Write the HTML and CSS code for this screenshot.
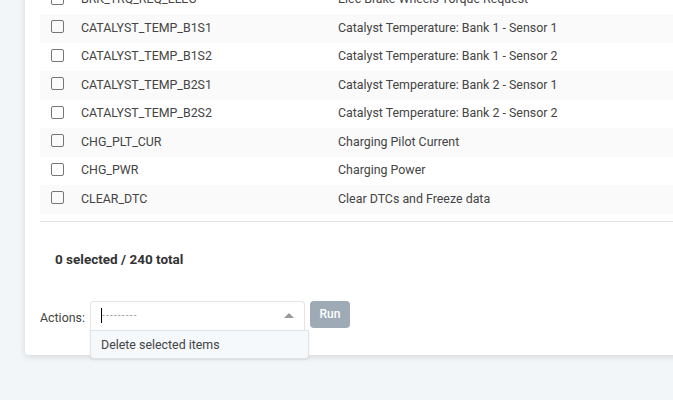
FILE: index.html
```html
<!DOCTYPE html>
<html>
<head>
<meta charset="utf-8">
<link rel="stylesheet" href="styles.css">
</head>
<body>
<div class="card">
  <div class="table">
    <div class="row"><span class="cb"></span><span class="c1">BRK_TRQ_REQ_ELEC</span><span class="c2">Elec Brake Wheels Torque Request</span></div>
    <div class="row alt"><span class="cb"></span><span class="c1">CATALYST_TEMP_B1S1</span><span class="c2">Catalyst Temperature: Bank 1 - Sensor 1</span></div>
    <div class="row"><span class="cb"></span><span class="c1">CATALYST_TEMP_B1S2</span><span class="c2">Catalyst Temperature: Bank 1 - Sensor 2</span></div>
    <div class="row alt"><span class="cb"></span><span class="c1">CATALYST_TEMP_B2S1</span><span class="c2">Catalyst Temperature: Bank 2 - Sensor 1</span></div>
    <div class="row"><span class="cb"></span><span class="c1">CATALYST_TEMP_B2S2</span><span class="c2">Catalyst Temperature: Bank 2 - Sensor 2</span></div>
    <div class="row alt"><span class="cb"></span><span class="c1">CHG_PLT_CUR</span><span class="c2">Charging Pilot Current</span></div>
    <div class="row"><span class="cb"></span><span class="c1">CHG_PWR</span><span class="c2">Charging Power</span></div>
    <div class="row alt"><span class="cb"></span><span class="c1">CLEAR_DTC</span><span class="c2">Clear DTCs and Freeze data</span></div>
  </div>
  <div class="count">0 selected / 240 total</div>
  <div class="actions">
    <span class="label">Actions:</span>
    <div class="select">
      <div class="sel-box">
        <span class="caret"></span><span class="dashes">---------</span>
        <span class="arrow"></span>
      </div>
      <div class="dropdown">Delete selected items</div>
    </div>
    <button class="run">Run</button>
  </div>
</div>
</body>
</html>
```

FILE: styles.css
```css
html, body {
  margin: 0;
  padding: 0;
  height: 100%;
  overflow: hidden;
}
body {
  background: #f3f6f8;
  font-family: Roboto, "Liberation Sans", sans-serif;
  font-size: 12.4px;
  color: #444;
}
.card {
  margin-top: -14.5px;
  margin-left: 25px;
  width: 700px;
  background: #fff;
  border-radius: 0 0 4px 4px;
  box-shadow: 0 2px 6px rgba(0, 0, 0, 0.12);
  padding: 0 15px 25px;
  box-sizing: border-box;
}
.table {
  border-bottom: 1px solid #e3e3e3;
  padding-bottom: 7px;
}
.row {
  height: 28.5px;
  display: flex;
  align-items: center;
}
.row.alt {
  background: #fafafa;
}
.cb {
  width: 11px;
  height: 11px;
  border: 1px solid #767676;
  border-radius: 2px;
  margin-left: 11px;
  margin-top: -3px;
  flex: none;
}
.c1, .c2 {
  padding-bottom: 2px;
}
.c1 {
  margin-left: 17px;
  width: 257px;
  flex: none;
}
.c2 {
  flex: none;
}
.count {
  font-weight: bold;
  font-size: 13.5px;
  color: #333;
  padding: 30px 0 0 15px;
  height: 44px;
  line-height: 15px;
}
.actions {
  display: flex;
  align-items: flex-start;
  padding-top: 5px;
}
.label {
  line-height: 33px;
  height: 29px;
  width: 50px;
  flex: none;
}
.select {
  position: relative;
  width: 215px;
  height: 29px;
  flex: none;
}
.sel-box {
  height: 29px;
  box-sizing: border-box;
  border: 1px solid #e4e4e4;
  border-bottom: none;
  border-radius: 4px 4px 0 0;
  display: flex;
  align-items: center;
  padding-left: 10px;
}
.caret {
  width: 1px;
  height: 15px;
  background: #000;
}
.dashes {
  color: #999;
  font-size: 10px;
  letter-spacing: 1.2px;
  line-height: 12px;
}
.arrow {
  margin-left: auto;
  margin-right: 10px;
  width: 0;
  height: 0;
  border-left: 5px solid transparent;
  border-right: 5px solid transparent;
  border-bottom: 5px solid #999;
}
.dropdown {
  position: absolute;
  left: 0;
  top: 29px;
  width: 219px;
  height: 29px;
  box-sizing: border-box;
  background: #f5f9fc;
  border: 1px solid #dfe3e6;
  border-radius: 0 0 4px 4px;
  padding-left: 10px;
  line-height: 27px;
  box-shadow: 0 1px 2px rgba(0, 0, 0, 0.08);
  color: #444;
}
.run {
  margin-left: 5px;
  width: 40px;
  height: 27px;
  border: none;
  border-radius: 4px;
  background: #9eabb6;
  color: #fff;
  font-family: Roboto, "Liberation Sans", sans-serif;
  font-size: 12px;
  font-weight: 500;
  padding: 0;
  line-height: 25px;
}
```
